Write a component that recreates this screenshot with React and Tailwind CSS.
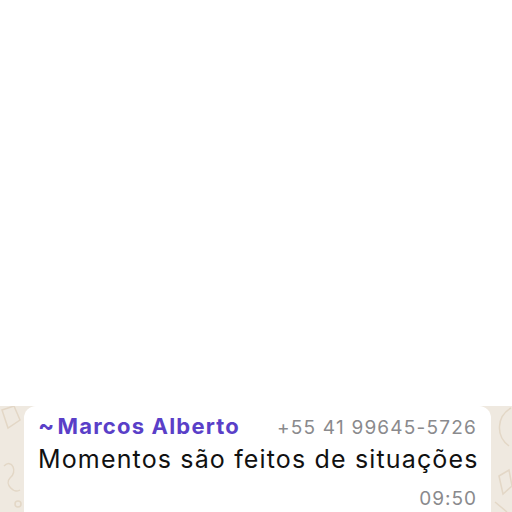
export default function App() {
  return (
    <div className="w-[512px] h-[512px] overflow-hidden bg-white flex flex-col" style={{fontFamily: 'Inter, "Liberation Sans", Arial, sans-serif'}}>
      <div className="h-[406px] shrink-0 bg-white" />
      <div className="flex-1 bg-[#efe9e0] pl-[24px] pr-[21px] relative">
        <svg className="absolute left-0 top-0" width="24" height="106" viewBox="0 0 24 106" fill="none" stroke="#e3d7c6" strokeWidth="1.5">
          <path d="M2 4 L14 0 L20 14 L8 22 Z" />
          <path d="M4 60 C 12 52, 18 66, 10 72 C 4 78, 14 88, 20 84" />
          <circle cx="18" cy="98" r="3" />
        </svg>
        <svg className="absolute right-0 top-0" width="21" height="106" viewBox="0 0 21 106" fill="none" stroke="#e3d7c6" strokeWidth="1.5">
          <path d="M20 2 C 6 10, 4 30, 18 40" />
          <path d="M8 70 L18 64 L21 80 L12 88 Z" />
          <path d="M4 96 L16 106" />
        </svg>
        <div className="bg-white rounded-t-[12px] h-full pl-[14px] pr-[14px] pt-[5px] relative">
          <div className="flex items-baseline justify-between h-[30px]">
            <span className="text-[#5a3fc8] font-bold text-[22px] leading-[30px] tracking-[1.2px] whitespace-nowrap"><span className="mr-[2px] text-[24px]">~</span>Marcos Alberto</span>
            <span className="text-[#8a8a8d] text-[19px] leading-[30px] tracking-[1.2px] whitespace-nowrap">+55 41 99645-5726</span>
          </div>
          <div className="text-[#111] text-[25px] leading-[36px] tracking-[1.15px] whitespace-nowrap">Momentos são feitos de situações</div>
          <div className="text-right text-[#8a8a8d] text-[19px] leading-[26px] mt-[9px] tracking-[1px]">09:50</div>
        </div>
      </div>
    </div>
  );
}
